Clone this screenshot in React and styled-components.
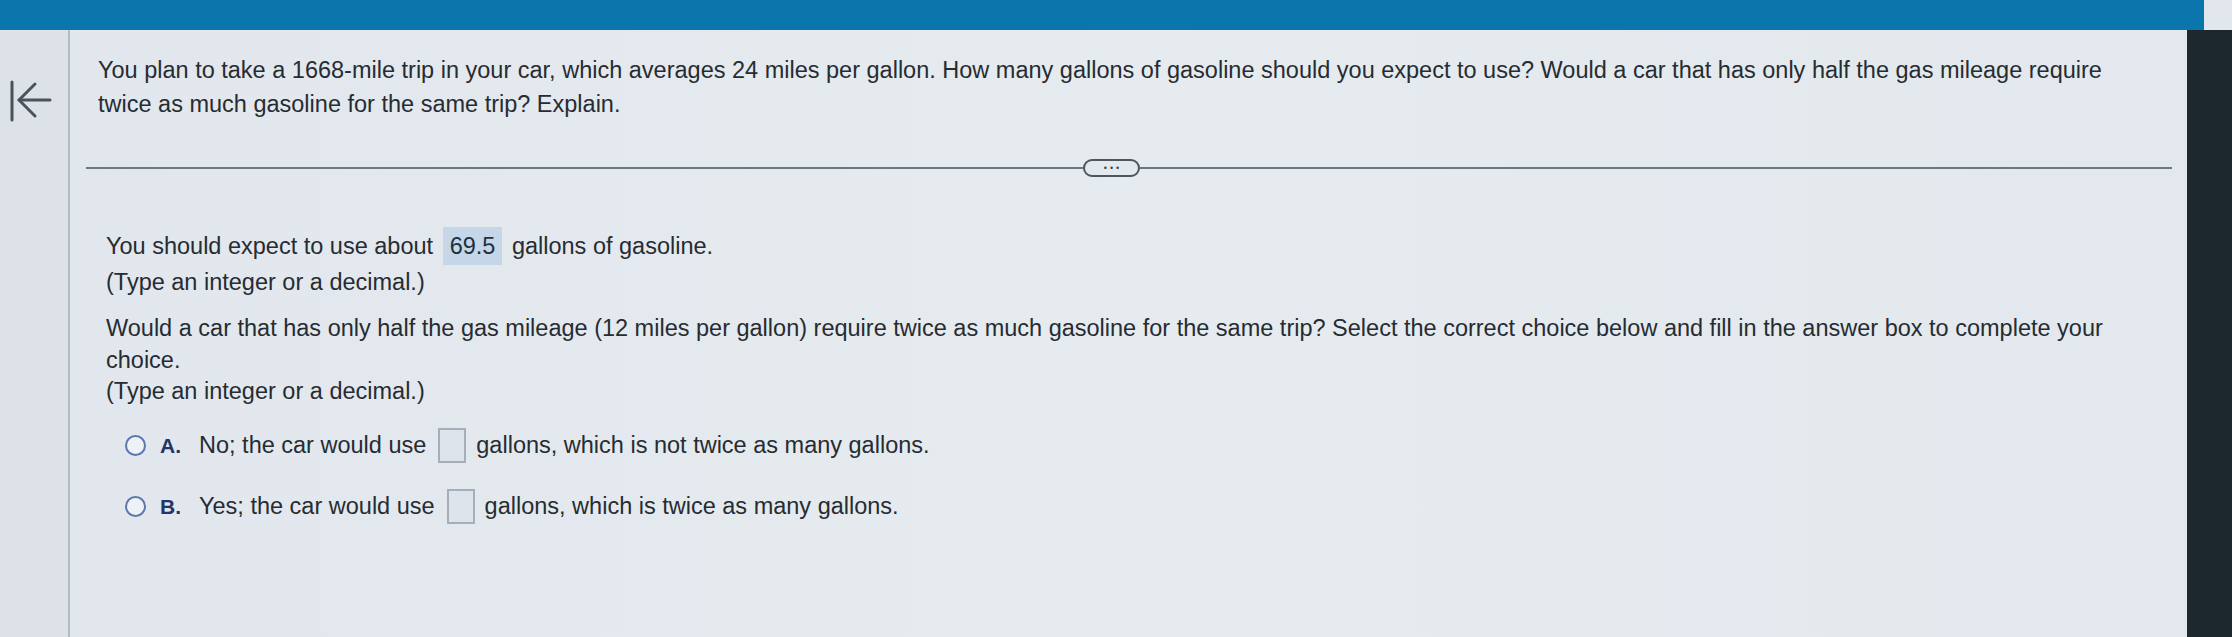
import React from 'react';
import styled, { createGlobalStyle } from 'styled-components';

const GlobalStyle = createGlobalStyle`
  html, body {
    margin: 0;
    padding: 0;
    background: #1d272e;
  }
  body {
    font-family: "Liberation Sans", Arial, sans-serif;
    color: #272c32;
  }
`;

const options = [
  { letter: 'A.', before: 'No; the car would use', after: 'gallons, which is not twice as many gallons.' },
  { letter: 'B.', before: 'Yes; the car would use', after: 'gallons, which is twice as many gallons.' },
];

export default function App() {
  return (
    <>
      <GlobalStyle />
      <Page>
        <TopBar />
        <Main>
          <Sidebar>
            <BackButton aria-label="back">
              <svg width="50" height="42" viewBox="0 0 50 42" fill="none" stroke="#4a525a" strokeWidth="3" strokeLinecap="round" strokeLinejoin="round">
                <path d="M7 2v38" />
                <path d="M14 20h31" />
                <path d="M30 4L14 20l16 16" />
              </svg>
            </BackButton>
          </Sidebar>

          <Content>
            <Question>
              You plan to take a 1668-mile trip in your car, which averages 24 miles per gallon. How many gallons of gasoline should you expect to use? Would a car that has only half the gas mileage require twice as much gasoline for the same trip? Explain.
            </Question>

            <Divider>
              <Rule $width="997px" />
              <MorePill>•••</MorePill>
              <Rule />
            </Divider>

            <Answer>
              <AnswerLine>
                You should expect to use about <Filled>69.5</Filled> gallons of gasoline.
              </AnswerLine>
              <Hint $gap="2px">(Type an integer or a decimal.)</Hint>

              <Prompt>
                Would a car that has only half the gas mileage (12 miles per gallon) require twice as much gasoline for the same trip? Select the correct choice below and fill in the answer box to complete your choice.
              </Prompt>
              <Hint>(Type an integer or a decimal.)</Hint>

              <Options>
                {options.map((o) => (
                  <Option key={o.letter}>
                    <Radio />
                    <Letter>{o.letter}</Letter>
                    <span>{o.before}</span>
                    <EmptyBox />
                    <span>{o.after}</span>
                  </Option>
                ))}
              </Options>
            </Answer>
          </Content>

          <Edge />
        </Main>
      </Page>
    </>
  );
}

const Page = styled.div`
  width: 2232px;
  height: 637px;
  display: flex;
  flex-direction: column;
  overflow: hidden;
  background: #e1e7ec;
`;

const TopBar = styled.div`
  height: 30px;
  flex-shrink: 0;
  background: #0b76ab;
  margin-right: 28px;
`;

const Main = styled.div`
  flex: 1;
  display: flex;
`;

const Sidebar = styled.div`
  width: 70px;
  flex-shrink: 0;
  border-right: 2px solid #b3bcc4;
  background: #dce2e8;
  padding-top: 50px;
  box-sizing: border-box;
`;

const BackButton = styled.div`
  width: 50px;
  height: 42px;
  margin-left: 5px;
`;

const Content = styled.div`
  flex: 1;
  padding: 23px 0 0 28px;
  background: linear-gradient(90deg, #e1e7ed 0%, #e6ebef 50%, #e2e8ed 100%);
`;

const Question = styled.p`
  margin: 0;
  width: 2030px;
  font-size: 23.5px;
  line-height: 34px;
`;

const Divider = styled.div`
  display: flex;
  align-items: center;
  height: 18px;
  margin: 38px 15px 0 -12px;
`;

const Rule = styled.div`
  height: 2px;
  background: #6f7880;
  flex: ${(p) => (p.$width ? `0 0 ${p.$width}` : '1')};
`;

const MorePill = styled.div`
  width: 57px;
  height: 18px;
  box-sizing: border-box;
  border: 2px solid #4c565f;
  border-radius: 9px;
  display: flex;
  align-items: center;
  justify-content: center;
  font-size: 9px;
  letter-spacing: 3px;
  padding-left: 3px;
  color: #3b444c;
  background: #e4e9ee;
`;

const Answer = styled.div`
  padding-left: 8px;
  margin-top: 50px;
  font-size: 23.5px;
`;

const AnswerLine = styled.div`
  line-height: 38px;
  height: 38px;
`;

const Filled = styled.span`
  display: inline-block;
  height: 38px;
  padding: 0 7px;
  margin: 0 3px;
  vertical-align: top;
  background: #c4d6e7;
  color: #25303a;
`;

const Hint = styled.div`
  line-height: 31px;
  margin-top: ${(p) => p.$gap || '0'};
`;

const Prompt = styled.p`
  margin: 14px 0 0;
  width: 2040px;
  line-height: 32px;
`;

const Options = styled.div`
  display: flex;
  flex-direction: column;
  gap: 24px;
  margin-top: 20px;
  padding-left: 19px;
`;

const Option = styled.div`
  display: flex;
  align-items: center;
  height: 37px;
`;

const Radio = styled.span`
  width: 21px;
  height: 21px;
  box-sizing: border-box;
  border: 2px solid #5b77ad;
  border-radius: 50%;
  background: #eef2f6;
  flex-shrink: 0;
`;

const Letter = styled.span`
  font-weight: bold;
  font-size: 21px;
  color: #23336b;
  margin: 0 18px 0 14px;
`;

const EmptyBox = styled.span`
  width: 28px;
  height: 35px;
  box-sizing: border-box;
  border: 2px solid #a4afba;
  background: #dde4eb;
  margin: 0 10px 0 12px;
  flex-shrink: 0;
`;

const Edge = styled.div`
  width: 45px;
  flex-shrink: 0;
  background: #1d272e;
`;
